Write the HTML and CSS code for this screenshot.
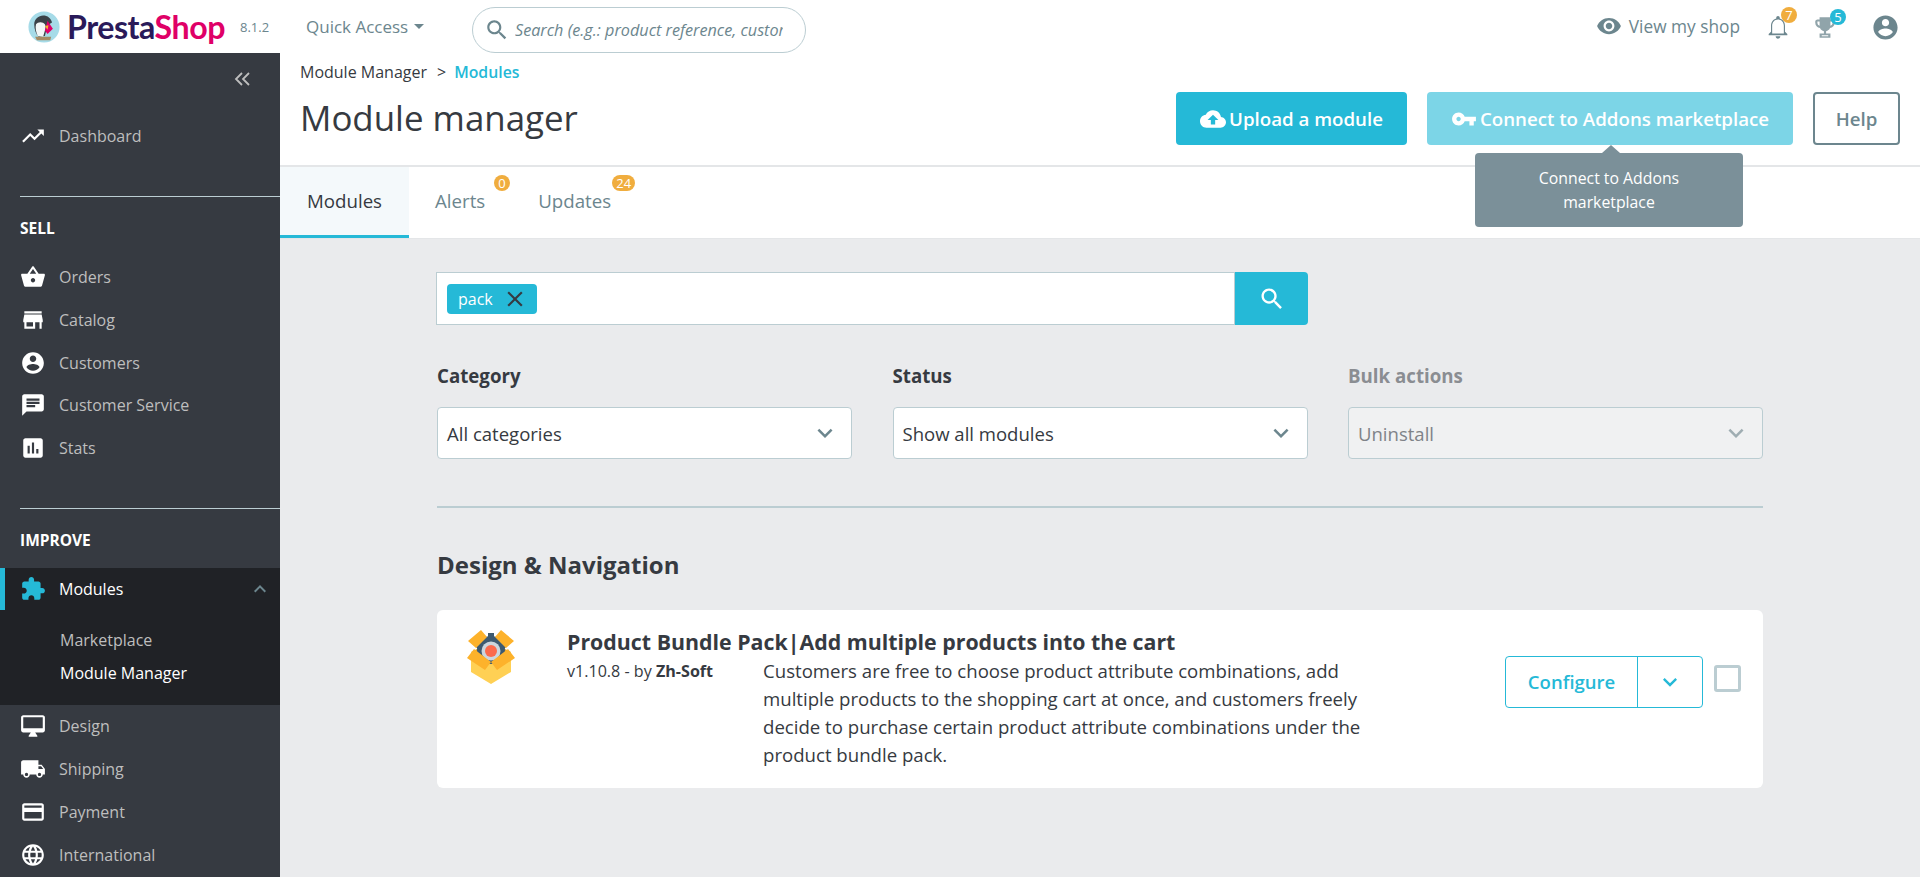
FILE: index.html
```html
<!DOCTYPE html>
<html lang="en">
<head>
<meta charset="utf-8">
<title>Module manager • PrestaShop</title>
<link rel="stylesheet" href="styles.css">
</head>
<body>
<svg class="defs" width="0" height="0" aria-hidden="true">
<symbol id="i-trend" viewBox="0 0 24 24"><path d="M16 6l2.29 2.29-4.88 4.88-4-4L2 16.59 3.41 18l6-6 4 4 6.3-6.29L22 12V6z"/></symbol>
<symbol id="i-basket" viewBox="0 0 24 24"><path d="M17.21 9l-4.38-6.56c-.19-.28-.51-.42-.83-.42-.32 0-.64.14-.83.43L6.79 9H2c-.55 0-1 .45-1 1 0 .09.01.18.04.27l2.54 9.27c.23.84 1 1.46 1.92 1.46h13c.92 0 1.69-.62 1.93-1.46l2.54-9.27L23 10c0-.55-.45-1-1-1h-4.79zM9 9l3-4.4L15 9H9zm3 8c-1.1 0-2-.9-2-2s.9-2 2-2 2 .9 2 2-.9 2-2 2z"/></symbol>
<symbol id="i-store" viewBox="0 0 24 24"><path d="M20 4H4v2h16V4zm1 10v-2l-1-5H4l-1 5v2h1v6h10v-6h4v6h2v-6h1zm-9 4H6v-4h6v4z"/></symbol>
<symbol id="i-user" viewBox="0 0 24 24"><path d="M12 2C6.48 2 2 6.48 2 12s4.48 10 10 10 10-4.48 10-10S17.52 2 12 2zm0 3c1.66 0 3 1.34 3 3s-1.34 3-3 3-3-1.34-3-3 1.34-3 3-3zm0 14.2c-2.5 0-4.71-1.28-6-3.22.03-1.99 4-3.08 6-3.08 1.99 0 5.97 1.09 6 3.08-1.29 1.94-3.5 3.22-6 3.22z"/></symbol>
<symbol id="i-chat" viewBox="0 0 24 24"><path d="M20 2H4c-1.1 0-1.99.9-1.99 2L2 22l4-4h14c1.1 0 2-.9 2-2V4c0-1.1-.9-2-2-2zM6 9h12v2H6V9zm8 5H6v-2h8v2zm4-6H6V6h12v2z"/></symbol>
<symbol id="i-stats" viewBox="0 0 24 24"><path d="M19 3H5c-1.1 0-2 .9-2 2v14c0 1.1.9 2 2 2h14c1.1 0 2-.9 2-2V5c0-1.1-.9-2-2-2zM9 17H7v-7h2v7zm4 0h-2V7h2v10zm4 0h-2v-4h2v4z"/></symbol>
<symbol id="i-ext" viewBox="0 0 24 24"><path d="M20.5 11H19V7c0-1.1-.9-2-2-2h-4V3.5C13 2.12 11.88 1 10.5 1S8 2.12 8 3.5V5H4c-1.1 0-1.99.9-1.99 2v3.8H3.5c1.49 0 2.7 1.21 2.7 2.7s-1.21 2.7-2.7 2.7H2V20c0 1.1.9 2 2 2h3.8v-1.5c0-1.49 1.21-2.7 2.7-2.7 1.49 0 2.7 1.21 2.7 2.7V22H17c1.1 0 2-.9 2-2v-4h1.5c1.38 0 2.5-1.12 2.5-2.5S21.88 11 20.5 11z"/></symbol>
<symbol id="i-desktop" viewBox="0 0 24 24"><path d="M21 2H3c-1.1 0-2 .9-2 2v12c0 1.1.9 2 2 2h7l-2 3v1h8v-1l-2-3h7c1.1 0 2-.9 2-2V4c0-1.1-.9-2-2-2zm0 12H3V4h18v10z"/></symbol>
<symbol id="i-truck" viewBox="0 0 24 24"><path d="M20 8h-3V4H3c-1.1 0-2 .9-2 2v11h2c0 1.66 1.34 3 3 3s3-1.34 3-3h6c0 1.66 1.34 3 3 3s3-1.34 3-3h2v-5l-3-4zM6 18.5c-.83 0-1.5-.67-1.5-1.5s.67-1.5 1.5-1.5 1.5.67 1.5 1.5-.67 1.5-1.5 1.5zm13.5-9l1.96 2.5H17V9.5h2.5zm-1.5 9c-.83 0-1.5-.67-1.5-1.5s.67-1.5 1.5-1.5 1.5.67 1.5 1.5-.67 1.5-1.5 1.5z"/></symbol>
<symbol id="i-card" viewBox="0 0 24 24"><path d="M20 4H4c-1.11 0-1.99.89-1.99 2L2 18c0 1.11.89 2 2 2h16c1.11 0 2-.89 2-2V6c0-1.11-.89-2-2-2zm0 14H4v-6h16v6zm0-10H4V6h16v2z"/></symbol>
<symbol id="i-globe" viewBox="0 0 24 24"><path d="M11.99 2C6.47 2 2 6.48 2 12s4.47 10 9.99 10C17.52 22 22 17.52 22 12S17.52 2 11.99 2zm6.93 6h-2.95c-.32-1.25-.78-2.45-1.38-3.56 1.84.63 3.37 1.91 4.33 3.56zM12 4.04c.83 1.2 1.48 2.53 1.91 3.96h-3.82c.43-1.43 1.08-2.76 1.91-3.96zM4.26 14C4.1 13.36 4 12.69 4 12s.1-1.36.26-2h3.38c-.08.66-.14 1.32-.14 2 0 .68.06 1.34.14 2H4.26zm.82 2h2.95c.32 1.25.78 2.45 1.38 3.56-1.84-.63-3.37-1.9-4.33-3.56zm2.95-8H5.08c.96-1.66 2.49-2.93 4.33-3.56C8.81 5.55 8.35 6.75 8.03 8zM12 19.96c-.83-1.2-1.48-2.53-1.91-3.96h3.82c-.43 1.43-1.08 2.76-1.91 3.96zM14.34 14H9.66c-.09-.66-.16-1.32-.16-2 0-.68.07-1.35.16-2h4.68c.09.65.16 1.32.16 2 0 .68-.07 1.34-.16 2zm.25 5.56c.6-1.11 1.06-2.31 1.38-3.56h2.95c-.96 1.65-2.49 2.93-4.33 3.56zM16.36 14c.08-.66.14-1.32.14-2 0-.68-.06-1.34-.14-2h3.38c.16.64.26 1.31.26 2s-.1 1.36-.26 2h-3.38z"/></symbol>
<symbol id="i-eye" viewBox="0 0 24 24"><path d="M12 4.5C7 4.5 2.73 7.61 1 12c1.73 4.39 6 7.5 11 7.5s9.27-3.11 11-7.5c-1.73-4.39-6-7.5-11-7.5zM12 17c-2.76 0-5-2.24-5-5s2.24-5 5-5 5 2.24 5 5-2.24 5-5 5zm0-8c-1.66 0-3 1.34-3 3s1.34 3 3 3 3-1.34 3-3-1.34-3-3-3z"/></symbol>
<symbol id="i-bell" viewBox="0 0 24 24"><path d="M12 22c1.1 0 2-.9 2-2h-4c0 1.1.9 2 2 2zm6-6v-5c0-3.07-1.63-5.64-4.5-6.32V4c0-.83-.67-1.5-1.5-1.5s-1.5.67-1.5 1.5v.68C7.64 5.36 6 7.92 6 11v5l-2 2v1h16v-1l-2-2zm-1 1.5H7V11c0-2.9 1.9-5.4 5-5.4s5 2.5 5 5.4z"/></symbol>
<symbol id="i-trophy" viewBox="0 0 24 24"><path fill-rule="evenodd" d="M19 5h-2V3H7v2H5c-1.1 0-2 .9-2 2v1c0 2.55 1.92 4.63 4.39 4.94.63 1.5 1.98 2.63 3.61 2.96V18H7v4h10v-4h-4v-2.1c1.63-.33 2.98-1.46 3.61-2.96C19.08 12.63 21 10.55 21 8V7c0-1.1-.9-2-2-2zM5 8V7h2v3.82C5.84 10.4 5 9.3 5 8zm14 0c0 1.3-.84 2.4-2 2.82V7h2v1zM9 19.5h6v1H9z"/></symbol>
<symbol id="i-search" viewBox="0 0 24 24"><path d="M15.5 14h-.79l-.28-.27C15.41 12.59 16 11.11 16 9.5 16 5.91 13.09 3 9.5 3S3 5.91 3 9.5 5.91 16 9.5 16c1.61 0 3.09-.59 4.23-1.57l.27.28v.79l5 4.99L20.49 19l-4.99-5zm-6 0C7.01 14 5 11.99 5 9.5S7.01 5 9.5 5 14 7.01 14 9.5 11.99 14 9.5 14z"/></symbol>
<symbol id="i-cloud" viewBox="0 0 24 24"><path d="M19.35 10.04C18.67 6.59 15.64 4 12 4 9.11 4 6.6 5.64 5.35 8.04 2.34 8.36 0 10.91 0 14c0 3.31 2.69 6 6 6h13c2.76 0 5-2.24 5-5 0-2.64-2.05-4.78-4.65-4.96zM14 13v4h-4v-4H7l5-5 5 5h-3z"/></symbol>
<symbol id="i-key" viewBox="0 0 24 24"><path d="M12.65 10C11.83 7.67 9.61 6 7 6c-3.31 0-6 2.69-6 6s2.69 6 6 6c2.61 0 4.83-1.67 5.65-4H17v4h4v-4h2v-4H12.65zM7 14c-1.1 0-2-.9-2-2s.9-2 2-2 2 .9 2 2-.9 2-2 2z"/></symbol>
<symbol id="i-close" viewBox="0 0 24 24"><path d="M19 6.41L17.59 5 12 10.59 6.41 5 5 6.41 10.59 12 5 17.59 6.41 19 12 13.41 17.59 19 19 17.59 13.41 12z"/></symbol>
<symbol id="i-down" viewBox="0 0 24 24"><path d="M7.41 8.59L12 13.17l4.59-4.58L18 10l-6 6-6-6 1.41-1.41z"/></symbol>
<symbol id="i-up" viewBox="0 0 24 24"><path d="M7.41 15.41L12 10.83l4.59 4.58L18 14l-6-6-6 6z"/></symbol>
</svg>

<header class="topbar">
  <div class="brand">
    <svg class="puffin" viewBox="0 0 36 36" aria-hidden="true">
      <circle cx="18" cy="18" r="17.5" fill="#a6dbe8"/>
      <path d="M7 15c0-6 5-10 10-10s9 3 10 8l-5 3-3 12-7 1c-3-3-5-8-5-14z" fill="#3b4248"/>
      <path d="M9 15c2-3 8-3 10 0 1 2 1 5 0 7l-2 7-6-1c-2-4-3-9-2-13z" fill="#f3f6f6"/>
      <path d="M22 11l6 9-6 6-3-4z" fill="#df0067"/>
      <path d="M19 17l4-1-1 5z" fill="#f8b62a"/>
      <path d="M8 29h18l-1 4H10z" fill="#a58a62"/>
    </svg>
    <span class="wordmark"><span class="w-presta">Presta</span><span class="w-shop">Shop</span></span>
    <span class="version">8.1.2</span>
  </div>
  <div class="quick">Quick Access <span class="caret"></span></div>
  <div class="topsearch">
    <svg class="ico ico-search"><use href="#i-search"/></svg>
    <input class="topsearch-input" type="text" placeholder="Search (e.g.: product reference, customer name, invoice number…)">
  </div>
  <div class="top-right">
    <div class="viewshop"><svg class="ico ico-eye"><use href="#i-eye"/></svg>View my shop</div>
    <div class="notif notif-bell"><svg class="ico ico-bell"><use href="#i-bell"/></svg><span class="count count-orange">7</span></div>
    <div class="notif notif-trophy"><svg class="ico ico-trophy"><use href="#i-trophy"/></svg><span class="count count-blue">5</span></div>
    <svg class="ico ico-account"><use href="#i-user"/></svg>
  </div>
</header>

<div class="shell">
  <nav class="sidebar">
    <div class="collapse"><svg viewBox="0 0 18 14" class="collapse-ico"><path d="M8 1L2 7l6 6M15 1L9 7l6 6"/></svg></div>
    <a class="nav-row nav-dash"><svg class="ico nav-ico"><use href="#i-trend"/></svg>Dashboard</a>
    <div class="nav-sep"></div>
    <div class="nav-title">SELL</div>
    <a class="nav-row"><svg class="ico nav-ico"><use href="#i-basket"/></svg>Orders</a>
    <a class="nav-row"><svg class="ico nav-ico"><use href="#i-store"/></svg>Catalog</a>
    <a class="nav-row"><svg class="ico nav-ico"><use href="#i-user"/></svg>Customers</a>
    <a class="nav-row"><svg class="ico nav-ico"><use href="#i-chat"/></svg>Customer Service</a>
    <a class="nav-row"><svg class="ico nav-ico"><use href="#i-stats"/></svg>Stats</a>
    <div class="nav-sep nav-sep-2"></div>
    <div class="nav-title">IMPROVE</div>
    <div class="nav-open">
      <a class="nav-row nav-active"><svg class="ico nav-ico nav-ico-active"><use href="#i-ext"/></svg>Modules<svg class="ico nav-chevron"><use href="#i-up"/></svg></a>
      <a class="nav-sub">Marketplace</a>
      <a class="nav-sub nav-sub-active">Module Manager</a>
    </div>
    <a class="nav-row"><svg class="ico nav-ico"><use href="#i-desktop"/></svg>Design</a>
    <a class="nav-row"><svg class="ico nav-ico"><use href="#i-truck"/></svg>Shipping</a>
    <a class="nav-row"><svg class="ico nav-ico"><use href="#i-card"/></svg>Payment</a>
    <a class="nav-row"><svg class="ico nav-ico"><use href="#i-globe"/></svg>International</a>
  </nav>

  <main class="main">
    <section class="pagehead">
      <div class="crumbs"><span>Module Manager</span><span class="crumb-sep">&gt;</span><span class="crumb-on">Modules</span></div>
      <div class="headrow">
        <h1 class="title">Module manager</h1>
        <div class="actions">
          <a class="btn btn-primary"><svg class="ico btn-ico"><use href="#i-cloud"/></svg>Upload a module</a>
          <a class="btn btn-light"><svg class="ico btn-ico"><use href="#i-key"/></svg>Connect to Addons marketplace</a>
          <a class="btn btn-help">Help</a>
        </div>
      </div>
      <div class="tooltip">Connect to Addons<br>marketplace</div>
    </section>
    <div class="tabs">
      <a class="tab tab-on">Modules</a>
      <a class="tab tab-alerts">Alerts<span class="tabcount tabcount-1">0</span></a>
      <a class="tab tab-updates">Updates<span class="tabcount tabcount-2">24</span></a>
    </div>

    <div class="content">
      <div class="searchbar">
        <div class="searchfield"><span class="tag">pack<svg class="ico tag-x"><use href="#i-close"/></svg></span></div>
        <button class="searchbtn"><svg class="ico"><use href="#i-search"/></svg></button>
      </div>

      <div class="filters">
        <div class="filter">
          <div class="flabel">Category</div>
          <div class="select">All categories<svg class="ico sel-arrow"><use href="#i-down"/></svg></div>
        </div>
        <div class="filter">
          <div class="flabel">Status</div>
          <div class="select">Show all modules<svg class="ico sel-arrow"><use href="#i-down"/></svg></div>
        </div>
        <div class="filter filter-off">
          <div class="flabel">Bulk actions</div>
          <div class="select">Uninstall<svg class="ico sel-arrow"><use href="#i-down"/></svg></div>
        </div>
      </div>

      <hr class="rule">
      <h2 class="section">Design &amp; Navigation</h2>

      <article class="card">
        <svg class="modicon" viewBox="0 0 48 54" aria-hidden="true">
          <path d="M24 54L4 42V22l20 8 20-8v20z" fill="#ffd054"/>
          <path d="M24 30L4 22l20-10 20 10z" fill="#e5a62a"/>
          <circle cx="24" cy="20" r="14" fill="#3e5a70"/>
          <path d="M21 3h6v6h-6zM8 16l5-4 4 5-5 3zM40 16l-5-4-4 5 5 3z" fill="#3e5a70"/>
          <circle cx="24" cy="21" r="9.5" fill="#ccd6dd"/>
          <circle cx="24" cy="21" r="6" fill="#fb6a4c"/>
          <path d="M1 11L14 0l6 7L9 18zM47 11L34 0l-6 7 11 11z" fill="#fdb22b"/>
          <path d="M0 28l7-9 17 13-6 8zM48 28l-7-9-17 13 6 8z" fill="#fdb22b"/>
        </svg>
        <div class="card-body">
          <h3 class="card-title">Product Bundle Pack|Add multiple products into the cart</h3>
          <div class="card-meta">
            <div class="card-ver">v1.10.8 - by <b>Zh-Soft</b></div>
            <p class="card-desc">Customers are free to choose product attribute combinations, add multiple products to the shopping cart at once, and customers freely decide to purchase certain product attribute combinations under the product bundle pack.</p>
          </div>
        </div>
        <div class="card-actions">
          <div class="split">
            <span class="split-main">Configure</span>
            <span class="split-arrow"><svg class="ico"><use href="#i-down"/></svg></span>
          </div>
          <span class="check"></span>
        </div>
      </article>
    </div>
  </main>
</div>
</body>
</html>
```

FILE: styles.css
```css
* { box-sizing: border-box; }
html, body { margin: 0; height: 877px; overflow: hidden; }
body { font-family: "Open Sans", "Noto Sans", sans-serif; font-size: 17px; color: #363a41; background: #eaebed; }
.defs { position: absolute; }
.ico { display: block; fill: currentColor; flex: none; }

/* top bar */
.topbar { height: 53px; background: #fff; display: flex; align-items: center; position: relative; }
.brand { width: 306px; padding-left: 28px; display: flex; align-items: center; flex: none; }
.puffin { width: 32px; height: 32px; flex: none; }
.wordmark { font-family: "Lato", sans-serif; font-size: 32.2px; font-weight: 700; margin-left: 7px; letter-spacing: -.5px; line-height: 40px; }
.w-presta { color: #2a1a5a; }
.w-shop { color: #df0067; }
.version { font-size: 13px; color: #6c868e; margin-left: 15px; }
.quick { width: 166px; flex: none; font-size: 17px; color: #6c868e; display: flex; align-items: center; gap: 6px; }
.caret { border: 5.5px solid transparent; border-top-color: #6c868e; border-bottom: 0; }
.topsearch { width: 334px; height: 46px; margin-top: 6px; border: 1px solid #bbcdd2; border-radius: 23px; display: flex; align-items: center; padding: 0 22px 0 11px; overflow: hidden; }
.ico-search { width: 26px; height: 26px; color: #6c868e; margin-right: 5px; }
.topsearch-input { flex: 1; min-width: 0; border: 0; outline: 0; padding: 0; background: none; font-family: inherit; font-style: italic; font-size: 16.2px; color: #6c868e; }
.topsearch-input::placeholder { color: #6c868e; opacity: 1; }
.top-right { margin-left: auto; display: flex; align-items: center; padding: 1px 20px 0 0; color: #6c868e; }
.viewshop { display: flex; align-items: center; font-size: 17.3px; gap: 7px; margin: -2px 24px 0 0; }
.ico-eye { width: 26px; height: 26px; }
.notif { position: relative; }
.notif-bell { margin-right: 20px; }
.notif-trophy { margin-right: 33px; }
.ico-bell { width: 28px; height: 28px; }
.ico-trophy { width: 26px; height: 26px; opacity: .75; }
.ico-account { width: 29px; height: 29px; }
.count { position: absolute; width: 16px; height: 16px; border-radius: 8px; font-size: 13px; line-height: 16px; text-align: center; color: #fff; }
.count-orange { background: #f0ad3e; top: -6px; right: -5px; }
.count-blue { background: #25b9d7; top: -5px; right: -8px; }

/* layout */
.shell { display: flex; height: 824px; }

/* sidebar */
.sidebar { width: 280px; flex: none; background: #363a41; color: #bebebe; font-size: 16px; overflow: hidden; }
.collapse { height: 48px; padding: 19px 28px 0 0; display: flex; justify-content: flex-end; }
.collapse-ico { width: 18px; height: 14px; fill: none; stroke: #bebebe; stroke-width: 1.8; }
.nav-row { display: flex; align-items: center; height: 42.75px; padding-left: 20px; color: #bebebe; position: relative; }
.nav-dash { margin-top: 14px; }
.nav-ico { width: 26px; height: 26px; margin-right: 13px; color: #fff; }
.nav-sep { height: 1px; background: #bbcdd2; margin: 38px 0 0 20px; }
.nav-sep-2 { margin-top: 38px; }
.nav-title { font-size: 15.5px; font-weight: 700; color: #fff; padding-left: 20px; height: 20px; line-height: 20px; margin: 21px 0 18px; }
.nav-open { background: #202226; height: 137.5px; }
.nav-active { color: #fff; border-left: 5px solid #25b9d7; padding-left: 15px; }
.nav-ico-active { color: #25b9d7; }
.nav-chevron { width: 24px; height: 24px; color: #6c868e; margin-left: auto; margin-right: 8px; }
.nav-sub { display: block; padding-left: 60px; height: 32.5px; line-height: 32.5px; color: #bebebe; }
.nav-active + .nav-sub { margin-top: 14px; }
.nav-sub-active { color: #fff; }

/* main */
.main { flex: 1; min-width: 0; }
.pagehead { background: #fff; height: 114px; padding: 9px 20px 0 20px; border-bottom: 2px solid #e4e6e8; position: relative; }
.crumbs { font-size: 16px; line-height: 21px; display: flex; gap: 10px; }
.crumb-sep { margin-right: -2px; }
.crumb-on { color: #25b9d7; font-weight: 600; font-size: 15.8px; }
.headrow { display: flex; justify-content: space-between; align-items: center; margin-top: 9px; }
.title { margin: -1px 0 1px; font-size: 34.9px; font-weight: 400; line-height: 52px; }
.actions { display: flex; gap: 20px; }
.btn { height: 53px; display: flex; align-items: center; justify-content: center; border-radius: 4px; font-size: 18.7px; font-weight: 600; color: #fff; }
.btn-primary { width: 231px; background: #25b9d7; }
.btn-light { width: 366px; background: #7cd5e7; }
.btn-help { width: 87px; background: #fff; border: 2px solid #6c868e; color: #6c868e; }
.btn-ico { width: 26px; height: 26px; margin-right: 3px; }
.tooltip { position: absolute; left: 1195px; top: 100px; width: 268px; height: 74px; background: #7b9099; color: #fff; border-radius: 4px; text-align: center; font-size: 15.8px; line-height: 24px; padding-top: 13px; z-index: 3; }
.tooltip::before { content: ""; position: absolute; left: 127px; top: -8px; border: 9px solid transparent; border-top: 0; border-bottom: 8px solid #7b9099; }
.tabs { background: #fff; height: 72px; display: flex; border-bottom: 1px solid #e4e6e8; }
.tab { position: relative; font-size: 18.7px; color: #6c868e; display: flex; align-items: center; justify-content: center; height: 71px; padding-bottom: 5px; }
.tab-on { width: 129px; background: #f4f9fb; color: #363a41; border-bottom: 3px solid #25b9d7; padding-bottom: 2px; }
.tab-alerts { margin-left: 26px; }
.tab-updates { margin-left: 53px; }
.tabcount { position: absolute; top: 8px; height: 16px; border-radius: 8px; background: #f0ad3e; color: #fff; font-size: 13px; line-height: 16px; text-align: center; }
.tabcount-1 { left: 59px; width: 16px; }
.tabcount-2 { left: 74px; width: 23px; }

/* content */
.content { padding: 33px 156px 0 156px; }
.searchbar { width: 872px; height: 53px; display: flex; }
.searchfield { flex: 1; background: #fff; border: 1px solid #bbcdd2; display: flex; align-items: center; padding-left: 10px; }
.tag { display: flex; align-items: center; height: 30px; padding: 0 9px 0 11px; background: #25b9d7; color: #fff; border-radius: 4px; font-size: 16px; }
.tag-x { width: 26px; height: 26px; color: #363a41; margin-left: 9px; }
.searchbtn { width: 73px; border: 0; padding: 0; background: #25b9d7; color: #fff; border-radius: 0 4px 4px 0; display: flex; align-items: center; justify-content: center; }
.searchbtn .ico { width: 28px; height: 28px; }
.filters { display: flex; gap: 40.5px; margin: 37px 0 0 1px; }
.filter { width: 415px; }
.flabel { font-size: 18.7px; font-weight: 700; line-height: 27px; }
.select { height: 52px; margin-top: 18px; background: #fff; border: 1px solid #bbcdd2; border-radius: 4px; padding-left: 9px; display: flex; align-items: center; justify-content: space-between; font-size: 18.55px; color: #363a41; }
.sel-arrow { width: 30px; height: 30px; color: #6c868e; margin-right: 11px; }
.filter-off .flabel { color: #8a8d92; }
.filter-off .select { background: #f0f1f2; color: #7f8388; }
.filter-off .sel-arrow { color: #9fadb2; }
.rule { border: 0; height: 2px; background: #bbcdd2; margin: 47px 0 0 1px; width: 1326px; }
.section { margin: 40px 0 0 1px; font-size: 24px; font-weight: 700; line-height: 33px; }
.card { width: 1326px; height: 178px; margin: 29px 0 0 1px; background: #fff; border-radius: 6px; display: flex; position: relative; }
.modicon { width: 48px; height: 54px; margin: 20px 0 0 30px; flex: none; }
.card-body { margin-left: 52px; padding-top: 17px; width: 800px; }
.card-title { margin: 0; font-size: 21.35px; font-weight: 700; line-height: 30px; white-space: nowrap; }
.card-meta { display: flex; }
.card-ver { width: 196px; flex: none; font-size: 16.1px; line-height: 24px; padding-top: 2px; }
.card-desc { margin: 0; width: 610px; flex: none; font-size: 18.63px; line-height: 28px; }
.card-actions { position: absolute; left: 1068px; top: 46px; display: flex; }
.split { width: 198px; height: 52px; border: 1px solid #25b9d7; border-radius: 4px; color: #25b9d7; display: flex; align-items: center; font-size: 18.5px; font-weight: 600; }
.split-main { width: 132px; text-align: center; line-height: 50px; border-right: 1px solid #25b9d7; }
.split-arrow { flex: 1; display: flex; justify-content: center; }
.split-arrow .ico { width: 28px; height: 28px; }
.check { width: 27px; height: 27px; border: 3px solid #bbcdd2; border-radius: 3px; margin: 9px 0 0 11px; }
```
